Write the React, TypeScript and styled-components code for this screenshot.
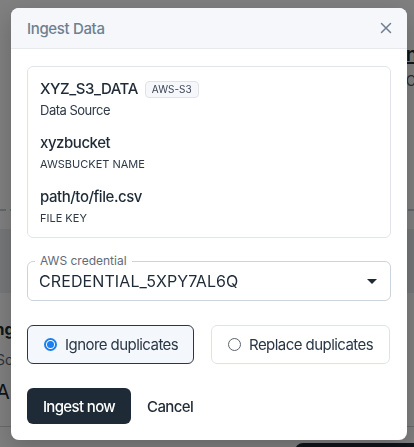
import { useState } from "react";
import styled, { createGlobalStyle } from "styled-components";

const GlobalStyle = createGlobalStyle`
  html, body {
    margin: 0;
    padding: 0;
    background: #ffffff;
    font-family: "Inter", "Noto Sans", sans-serif;
  }
  * { box-sizing: border-box; }
`;

// ---------- page behind the dialog ----------

const Page = styled.div`
  width: 414px;
  height: 447px;
  overflow: hidden;
  background: #ffffff;
  color: #1e2a35;
`;

const PageHeader = styled.div`
  padding: 42px 0 0 0;
  display: flex;
  flex-direction: column;
  align-items: flex-end;
  gap: 6px;
  height: 211px;
  border-bottom: 2px dashed #c7ced6;
`;

const PageTitle = styled.div`
  font-size: 20px;
  font-weight: 600;
  text-decoration: underline;
  margin-right: -4px;
`;

const PageSub = styled.div`
  font-size: 14px;
  color: #4c5866;
  margin-right: -2px;
`;

const Band = styled.div`
  margin-top: 18px;
  height: 64px;
  background: #eceef2;
`;

const PageSection = styled.div`
  padding: 26px 0 0 0;
  height: 134px;
  border-bottom: 1px solid #cfd4da;
  display: flex;
  flex-direction: column;
  gap: 12px;
`;

const SectionHead = styled.div`
  font-size: 16px;
  font-weight: 700;
  margin-left: -10px;
`;

const SectionSub = styled.div`
  font-size: 14px;
  color: #5b6673;
  margin-left: -4px;
`;

const SectionValue = styled.div`
  font-size: 20px;
  margin-left: -4px;
`;

const PageButton = styled.div`
  margin: 16px 0 0 295px;
  width: 130px;
  height: 30px;
  border-radius: 8px;
  background: #1e2a35;
`;

// ---------- dialog ----------

const Backdrop = styled.div`
  position: fixed;
  inset: 0;
  background: rgba(0, 0, 0, 0.5);
`;

const Dialog = styled.div`
  position: fixed;
  left: 11px;
  top: 8px;
  width: 396px;
  background: #ffffff;
  border-radius: 8px;
  overflow: hidden;
  box-shadow: 0 8px 24px rgba(0, 0, 0, 0.2);
`;

const DialogHeader = styled.div`
  height: 41px;
  padding: 0 16px;
  display: flex;
  align-items: center;
  justify-content: space-between;
  background: #f5f7fa;
  border-bottom: 1px solid #e6eaef;
`;

const DialogTitle = styled.div`
  font-size: 15px;
  font-weight: 500;
  color: #6d7f91;
  letter-spacing: -0.35px;
`;

const CloseButton = styled.button`
  border: none;
  background: none;
  padding: 0;
  margin-right: -2px;
  display: flex;
  color: #6d7f91;
  cursor: pointer;
`;

const DialogBody = styled.div`
  padding: 17px 16px 16px;
  display: flex;
  flex-direction: column;
`;

const InfoCard = styled.div`
  border: 1px solid #e1e5ea;
  border-radius: 6px;
  padding: 12px 12px 11px;
  display: flex;
  flex-direction: column;
  gap: 15px;
`;

const InfoItem = styled.div`
  display: flex;
  flex-direction: column;
  gap: 3px;
`;

const InfoValueRow = styled.div`
  display: flex;
  align-items: center;
  gap: 7px;
`;

const InfoValue = styled.div`
  font-size: 15px;
  font-weight: 500;
  color: #1e2a35;
  line-height: 20px;
  letter-spacing: -0.45px;
`;

const Badge = styled.span`
  font-size: 10px;
  color: #3a4654;
  background: #f5f7fa;
  border: 1px solid #dfe3e8;
  border-radius: 4px;
  padding: 1px 6px;
  line-height: 13px;
`;

const InfoLabel = styled.div<{ $upper?: boolean }>`
  font-size: ${(p) => (p.$upper ? "11px" : "13px")};
  letter-spacing: ${(p) => (p.$upper ? "0" : "-0.5px")};
  color: #2e3a47;
  line-height: 16px;
`;

const SelectField = styled.div`
  position: relative;
  margin-top: 23px;
  height: 40px;
  border: 1px solid #cdd3da;
  border-radius: 6px;
  display: flex;
  align-items: center;
  justify-content: space-between;
  padding: 0 13px 0 11px;
`;

const SelectLabel = styled.span`
  position: absolute;
  left: 7px;
  top: -9px;
  padding: 0 5px;
  background: #ffffff;
  font-size: 12px;
  color: #5e6b78;
  line-height: 16px;
`;

const SelectValue = styled.span`
  font-size: 16px;
  color: #1e2a35;
  letter-spacing: 0.1px;
`;

const OptionRow = styled.div`
  margin-top: 24px;
  display: grid;
  grid-template-columns: 167px 179px;
  gap: 17px;
`;

const OptionCard = styled.label<{ $active: boolean }>`
  height: 39px;
  border: 1px solid ${(p) => (p.$active ? "#2b3744" : "#dfe3e8")};
  background: ${(p) => (p.$active ? "#f4f7fb" : "#ffffff")};
  border-radius: 6px;
  display: flex;
  align-items: center;
  gap: 8px;
  padding-left: 16px;
  cursor: pointer;
  font-size: 15px;
  letter-spacing: -0.55px;
  color: #2a3644;
`;

const RadioDot = styled.span<{ $checked: boolean }>`
  width: 13px;
  height: 13px;
  border-radius: 50%;
  border: ${(p) => (p.$checked ? "2px solid #1a7ff0" : "1.5px solid #5b6470")};
  background: #ffffff;
  display: flex;
  align-items: center;
  justify-content: center;
  flex-shrink: 0;
  &::after {
    content: "";
    width: 7px;
    height: 7px;
    border-radius: 50%;
    background: ${(p) => (p.$checked ? "#1a7ff0" : "transparent")};
  }
`;

const Actions = styled.div`
  margin-top: 24px;
  display: flex;
  align-items: center;
  gap: 16px;
`;

const PrimaryButton = styled.button`
  height: 36px;
  width: 104px;
  padding: 0;
  border: none;
  border-radius: 6px;
  background: #1e2a35;
  color: #ffffff;
  font-family: inherit;
  font-size: 15px;
  font-weight: 500;
  letter-spacing: -0.65px;
  cursor: pointer;
`;

const TextButton = styled.button`
  height: 36px;
  border: none;
  background: none;
  padding: 0;
  color: #1e2a35;
  font-family: inherit;
  font-size: 15px;
  font-weight: 500;
  letter-spacing: -0.6px;
  cursor: pointer;
`;

const options = ["Ignore duplicates", "Replace duplicates"];

export default function App() {
  const [choice, setChoice] = useState(0);

  return (
    <>
      <GlobalStyle />
      <Page>
        <PageHeader>
          <PageTitle>n</PageTitle>
          <PageSub>C</PageSub>
        </PageHeader>
        <Band />
        <PageSection>
          <SectionHead>Ingest data n;</SectionHead>
          <SectionSub>Source</SectionSub>
          <SectionValue>A</SectionValue>
        </PageSection>
        <PageButton />
      </Page>
      <Backdrop />
      <Dialog>
        <DialogHeader>
          <DialogTitle>Ingest Data</DialogTitle>
          <CloseButton aria-label="close">
            <svg width="14" height="14" viewBox="0 0 14 14" fill="none">
              <path d="M2.5 2.5L11.5 11.5M11.5 2.5L2.5 11.5" stroke="currentColor" strokeWidth="1.5" strokeLinecap="round" />
            </svg>
          </CloseButton>
        </DialogHeader>
        <DialogBody>
          <InfoCard>
            <InfoItem>
              <InfoValueRow>
                <InfoValue>XYZ_S3_DATA</InfoValue>
                <Badge>AWS-S3</Badge>
              </InfoValueRow>
              <InfoLabel>Data Source</InfoLabel>
            </InfoItem>
            <InfoItem>
              <InfoValue>xyzbucket</InfoValue>
              <InfoLabel $upper>AWSBUCKET NAME</InfoLabel>
            </InfoItem>
            <InfoItem>
              <InfoValue>path/to/file.csv</InfoValue>
              <InfoLabel $upper>FILE KEY</InfoLabel>
            </InfoItem>
          </InfoCard>

          <SelectField>
            <SelectLabel>AWS credential</SelectLabel>
            <SelectValue>CREDENTIAL_5XPY7AL6Q</SelectValue>
            <svg width="10" height="5" viewBox="0 0 10 5">
              <path d="M0 0H10L5 5Z" fill="#1e2a35" />
            </svg>
          </SelectField>

          <OptionRow>
            {options.map((opt, i) => (
              <OptionCard key={opt} $active={choice === i} onClick={() => setChoice(i)}>
                <RadioDot $checked={choice === i} />
                {opt}
              </OptionCard>
            ))}
          </OptionRow>

          <Actions>
            <PrimaryButton>Ingest now</PrimaryButton>
            <TextButton>Cancel</TextButton>
          </Actions>
        </DialogBody>
      </Dialog>
    </>
  );
}
